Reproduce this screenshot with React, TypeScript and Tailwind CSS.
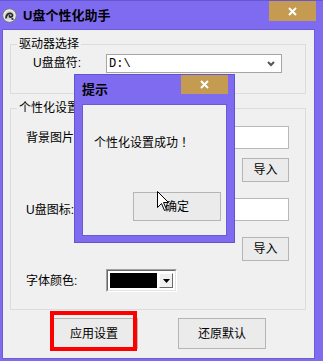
import React from 'react'

function CloseX() {
  return (
    <svg width="9" height="9" viewBox="0 0 9 9">
      <path d="M1 1 L8 8 M8 1 L1 8" stroke="#ffffff" strokeWidth={2} />
    </svg>
  )
}

function AppIcon() {
  return (
    <svg width="15" height="15" viewBox="0 0 15 15">
      <circle cx="7.5" cy="7.5" r="6.8" fill="#e9e9e9" stroke="#7a7a7a" strokeWidth={1} />
      <circle cx="7.5" cy="7.5" r="4.6" fill="#d4d4d4" />
      <path d="M4 10.5 C4 7 6 5 9 5.5 C11 6 11 8.5 9 9 C7.5 9.3 7 8 8 7.3" fill="none" stroke="#2a2a2a" strokeWidth={1.8} />
      <path d="M9.5 10.5 L11.5 11.5" stroke="#2a2a2a" strokeWidth={1.4} />
    </svg>
  )
}

function Button({ label, className = '' }: { label: string; className?: string }) {
  return (
    <button className={`border border-[#b5b5b5] bg-[#ebebeb] text-[12px] leading-none text-black flex items-center justify-center ${className}`}>
      {label}
    </button>
  )
}

function TextBox() {
  return <div className="w-[183px] h-[23px] border border-[#b9b9b9] bg-white" />
}

function ColorCombo() {
  return (
    <div className="w-[71px] h-[23px] border border-t-[#a0a0a0] border-l-[#a0a0a0] border-r-white border-b-white">
      <div className="w-full h-full border border-t-[#696969] border-l-[#696969] border-r-[#e3e3e3] border-b-[#e3e3e3] bg-white p-[2px] flex gap-[2px]">
        <div className="w-[47px] bg-black" />
        <div className="flex-1 bg-[#f0f0f0] border border-t-white border-l-white border-r-[#696969] border-b-[#696969] flex items-center justify-center">
          <svg width="7" height="4" viewBox="0 0 7 4">
            <path d="M0 0 L7 0 L3.5 4 Z" fill="#000000" />
          </svg>
        </div>
      </div>
    </div>
  )
}

export default function App() {
  return (
    <div className="w-[323px] h-[361px] bg-[#7f6bf0] border-t border-[#6656cf] flex flex-col relative overflow-hidden font-['Liberation_Sans','Noto_Sans_CJK_SC',sans-serif] text-[12px] text-black">
      {/* title bar */}
      <div className="h-[28px] flex items-start shrink-0">
        <div className="ml-[2px] mt-[7px]">
          <AppIcon />
        </div>
        <span className="ml-[6px] mt-[7px] text-[13px] font-bold leading-[15px]">U盘个性化助手</span>
        <div className="ml-auto mr-[7px] w-[47px] h-[20px] bg-[#c59b52] flex items-center justify-center">
          <CloseX />
        </div>
      </div>

      {/* client area */}
      <div className="ml-[2px] mr-[8px] h-[330px] bg-[#f0f0f0] border border-[#6c5cd6] flex flex-col">
        <fieldset className="ml-[7px] mt-[8px] w-[296px] h-[56px] border border-[#dcdcdc]">
          <legend className="ml-[6px] px-[2px] leading-[12px]">驱动器选择</legend>
          <div className="flex items-center pl-[22px] pt-[4px]">
            <span className="w-[73px] leading-[19px]">U盘盘符:</span>
            <div className="w-[176px] h-[19px] border border-[#a5a5a5] bg-white flex items-center pl-[2px] pr-[6px]">
              <span className="font-['Liberation_Mono',monospace] text-[12px] leading-none">D:\</span>
              <svg className="ml-auto" width="8" height="6" viewBox="0 0 8 6">
                <path d="M1 1 L4 4 L7 1" fill="none" stroke="#555555" strokeWidth={2} />
              </svg>
            </div>
          </div>
        </fieldset>

        <fieldset className="ml-[7px] mt-[8px] w-[296px] h-[208px] border border-[#dcdcdc]">
          <legend className="ml-[6px] px-[2px] leading-[12px]">个性化设置</legend>
          <div className="pl-[15px] pr-[16px]">
            <div className="flex items-center mt-[12px]">
              <span className="w-[80px]">背景图片:</span>
              <TextBox />
            </div>
            <div className="flex justify-end mt-[9px]">
              <Button label="导入" className="w-[47px] h-[24px]" />
            </div>
            <div className="flex items-center mt-[16px]">
              <span className="w-[80px]">U盘图标:</span>
              <TextBox />
            </div>
            <div className="flex justify-end mt-[16px]">
              <Button label="导入" className="w-[47px] h-[24px]" />
            </div>
            <div className="flex items-center mt-[8px]">
              <span className="w-[80px]">字体颜色:</span>
              <ColorCombo />
            </div>
          </div>
        </fieldset>

        <div className="flex ml-[47px] mt-[8px] gap-[40px]">
          <Button label="应用设置" className="w-[88px] h-[31px]" />
          <Button label="还原默认" className="w-[88px] h-[31px]" />
        </div>
      </div>

      {/* red annotation */}
      <div className="absolute left-[50px] top-[310px] w-[87px] h-[40px] border-4 border-[#ff0000]" />

      {/* message dialog */}
      <div className="absolute left-[74px] top-[73px] w-[161px] h-[169px] bg-[#7f6bf0] border border-[#6354cc] flex flex-col">
        <div className="h-[29px] flex items-start shrink-0">
          <span className="ml-[7px] mt-[7px] text-[13px] font-bold leading-[15px]">提示</span>
          <div className="ml-auto mr-[6px] w-[47px] h-[19px] bg-[#c59b52] flex items-center justify-center">
            <CloseX />
          </div>
        </div>
        <div className="ml-[7px] w-[145px] h-[132px] bg-[#f0f0f0] border border-[#6a5ad4]">
          <p className="ml-[11px] mt-[31px] leading-[12px] font-['Noto_Sans_CJK_SC',sans-serif]">
            个性化设置成功<span className="font-['Noto_Sans_CJK_TC',sans-serif]">！</span>
          </p>
          <Button label="确定" className="ml-[50px] mt-[44px] w-[88px] h-[29px]" />
        </div>
      </div>

      {/* mouse cursor */}
      <svg className="absolute left-[157px] top-[190px]" width="13" height="21" viewBox="0 0 13 21">
        <path d="M0.5 0.5 L0.5 16.5 L4.5 12.5 L7.5 19.5 L9.5 18.5 L6.5 11.5 L11.5 11.5 Z" fill="#ffffff" stroke="#000000" strokeWidth={1} />
      </svg>
    </div>
  )
}
